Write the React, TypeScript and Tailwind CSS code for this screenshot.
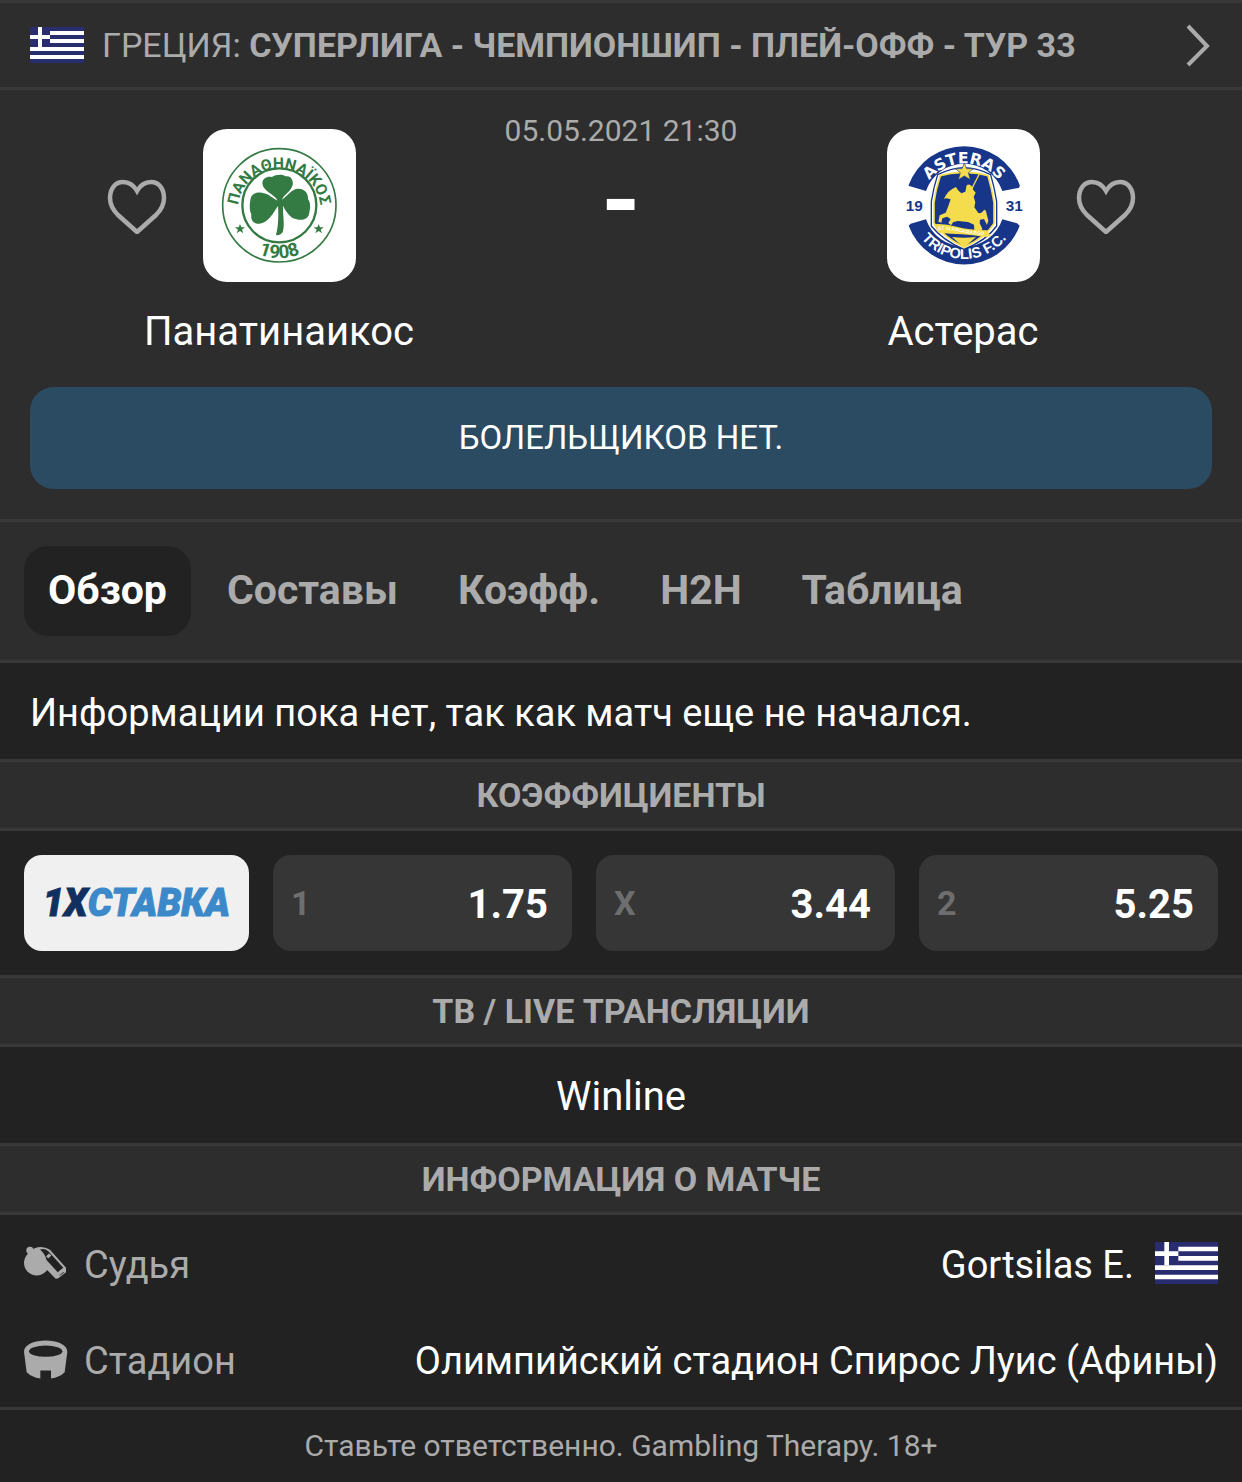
import React, { useState } from 'react';

interface Odd {
  label: string;
  value: string;
}

const tabs = ['Обзор', 'Составы', 'Коэфф.', 'H2H', 'Таблица'];

const odds: Odd[] = [
  { label: '1', value: '1.75' },
  { label: 'X', value: '3.44' },
  { label: '2', value: '5.25' },
];

function GreekFlag({ className }: { className: string }) {
  return (
    <svg viewBox="0 0 27 18" className={className} role="img" aria-label="Греция">
      <rect width="27" height="18" fill="#292c6f" />
      <path d="M10 2h17v2H10zM10 6h17v2H10zM0 10h27v2H0zM0 14h27v2H0z" fill="#fff" />
      <path d="M4 0h2v10H4zM0 4h10v2H0z" fill="#fff" />
    </svg>
  );
}

function PanathinaikosLogo() {
  return (
    <svg viewBox="39 27 459 459" className="h-full w-full" fill="#347a43" role="img" aria-label="Панатинаикос">
      <circle cx="268" cy="256" r="170" fill="none" stroke="#347a43" strokeWidth="5" />
      <circle cx="268" cy="256" r="111" fill="none" stroke="#347a43" strokeWidth="7" />
      <path id="pao-top" d="M144 270A124 124 0 1 1 392 270" fill="none" />
      <path id="pao-bottom" d="M109 256A159 159 0 0 0 427 256" fill="none" />
      <g className="font-bold" fontFamily="Roboto, 'Liberation Sans', sans-serif" textAnchor="middle">
        <text fontSize="47">
          <textPath href="#pao-top" startOffset="50%">ΠΑΝΑΘΗΝΑΪΚΟΣ</textPath>
        </text>
        <text fontSize="56">
          <textPath href="#pao-bottom" startOffset="50%">1908</textPath>
        </text>
      </g>
      <path d="M263 242C253 223 218 213 217 190C217 174 233 167 246 171C257 162 280 162 287 169C302 165 311 181 308 195C303 215 282 223 276 239C292 228 306 205 326 206C344 207 355 219 354 237C364 251 360 269 357 283C352 301 332 302 318 297C299 294 285 269 279 257C278 284 285 313 278 337C272 344 264 347 258 345C265 318 266 288 264 258C251 277 235 309 208 311C193 312 181 303 184 284C176 266 180 249 182 235C185 218 209 214 222 220C237 223 251 237 263 242Z" />
      <path d="M150 312l4 10h11l-9 7 4 11-10-7-10 7 4-11-9-7h11zM386 312l4 10h11l-9 7 4 11-10-7-10 7 4-11-9-7h11z" />
    </svg>
  );
}

function AsterasLogo() {
  return (
    <svg viewBox="51 27 459 459" className="h-full w-full" role="img" aria-label="Астерас">
      <g fill="#173689">
        <path d="M116 195A178 180 0 0 1 449 195Q450 202 446 204L397 213A121 121 0 0 0 168 213L120 199Q115 198 116 195Z" />
        <path d="M116 317A178 180 0 0 0 449 317L441 310L397 298A121 121 0 0 1 168 298L122 311Z" />
        <g className="font-bold" fontFamily="'Liberation Sans', sans-serif" fontSize="46">
          <text x="107" y="273">19</text>
          <text x="407" y="273">31</text>
        </g>
      </g>
      <path id="ast-top" d="M150 262A132 132 0 0 1 414 262" fill="none" />
      <path id="ast-bottom" d="M120 255A162 162 0 0 0 444 255" fill="none" />
      <text className="font-bold" fill="#fff" fontFamily="'DejaVu Sans', sans-serif" fontSize="47" textAnchor="middle">
        <textPath href="#ast-top" startOffset="50%">ASTERAS</textPath>
      </text>
      <text className="font-bold" fill="#fff" fontFamily="'Liberation Sans', sans-serif" fontSize="44" textAnchor="middle">
        <textPath href="#ast-bottom" startOffset="50%">TRIPOLIS F.C.</textPath>
      </text>
      <path d="M203 164Q247 143 282 143Q320 143 362 164Q374 205 380 245V318Q350 361 282 388Q218 361 184 318V245Q190 205 203 164Z" fill="#fff" stroke="#173689" strokeWidth="4" />
      <path d="M211 167Q248 156 282 158Q318 156 354 167Q366 208 372 248V310Q348 350 282 382Q220 350 192 310V248Q197 208 211 167Z" fill="#173689" stroke="#f5dc4d" strokeWidth="5" />
      <path d="M283 129l7 17h20l-15 12 6 21-18-11-18 11 6-21-15-12h20z" fill="#f5dc4d" stroke="#173689" strokeWidth="2" />
      <path d="M328 162l-17 33-7 17" fill="none" stroke="#f5dc4d" strokeWidth="4" />
      <path d="M222 236C229 220 239 210 248 206L258 201L264 211L274 220L286 215L290 196Q297 190 305 198L308 208L317 218L311 230L316 247L313 262L325 279Q335 281 339 274Q343 265 348 274L355 302L351 315L342 297L330 299L329 310L337 326L330 340L313 329L312 314L294 306L264 303L250 306L243 316L235 309L242 297L231 290L217 295L214 308L205 305L209 286L227 278L235 258L242 238L230 235Z" fill="#f5dc4d" />
      <path d="M190 313Q224 310 260 320T351 331L362 348L348 351Q307 345 275 343T206 338Z" fill="#f5dc4d" />
      <path d="M246 351Q282 356 318 351L282 383Z" fill="#f5dc4d" />
      <path id="ast-ribbon" d="M205 330Q238 328 271 336T360 345" fill="none" />
      <text className="font-bold" fill="#fff" fontFamily="'Liberation Sans', sans-serif" fontSize="14">
        <textPath href="#ast-ribbon">ET IN ARCADIA EGO</textPath>
      </text>
    </svg>
  );
}

function FavouriteButton({ team }: { team: string }) {
  return (
    <button type="button" aria-label={`В избранное: ${team}`}>
      <svg viewBox="0 0 60 56" className="h-14 w-15" fill="none" stroke="#ababab" strokeWidth="4.5">
        <path d="M30 13C26 6 21 4 16 4C8 4 3 11 3 20C3 27 6 32 11 37L30 54L49 37C54 32 57 27 57 20C57 11 52 4 44 4C39 4 34 6 30 13Z" />
      </svg>
    </button>
  );
}

function WhistleIcon() {
  return (
    <svg viewBox="4 0 132 104" className="h-[35px] w-11" fill="#ababab" aria-hidden="true">
      <circle cx="42" cy="50" r="38" />
      <circle cx="22" cy="13" r="11" />
      <path d="M16 20L36 6Q61-3 82 11L130 65V78L106 97L99 98L66 64Z" />
      <path d="M52 10Q65 5 77 15L122 65L105 78L72 42Q68 24 52 10Z" fill="#222" />
      <path d="M70 30l9-8 7 6-9 9zM106 84l18-13v3l-18 14z" />
      <path d="M110 87l13-10v3l-12 9z" fill="#222" />
    </svg>
  );
}

function StadiumIcon() {
  return (
    <svg viewBox="2 0 132 116" className="h-[39px] w-11" fill="#ababab" aria-hidden="true">
      <path d="M2 35C3-10 131-10 132 35L124 96Q109 111 83 115V91H51V115Q25 111 10 96Z" />
      <ellipse cx="67" cy="33" rx="50" ry="17" fill="#222" />
    </svg>
  );
}

function Team({ name, logo, side }: { name: string; logo: React.ReactNode; side: 'home' | 'away' }) {
  const heart = <FavouriteButton team={name} />;

  return (
    <div className="flex flex-col items-center">
      <div className="grid w-full grid-cols-[1fr_auto_1fr] items-center gap-9">
        <div className="flex justify-end">{side === 'home' && heart}</div>
        <div className="size-[153px] overflow-hidden rounded-3xl bg-white">{logo}</div>
        <div className="flex justify-start">{side === 'away' && heart}</div>
      </div>
      <h2 className="mt-6 text-[40px] leading-[52px] text-white">{name}</h2>
    </div>
  );
}

function SectionTitle({ children }: { children: React.ReactNode }) {
  return (
    <h3 className="border-y-3 border-[#383838] bg-[#2d2d2d] text-center text-[34px] leading-[66px] font-bold uppercase">
      {children}
    </h3>
  );
}

export default function App() {
  const [activeTab, setActiveTab] = useState('Обзор');

  return (
    <main className="bg-[#222222] font-['Roboto','Liberation_Sans',sans-serif] text-[#ababab]">
      <a href="#league" className="flex h-[90px] items-center border-y-3 border-[#383838] bg-[#2d2d2d] px-[30px] text-[34px]">
        <GreekFlag className="h-9 w-[54px]" />
        <span className="ml-[18px] whitespace-nowrap uppercase">
          Греция: <b className="font-bold">Суперлига - Чемпионшип - Плей-офф - Тур 33</b>
        </span>
        <svg viewBox="0 0 26 44" className="ml-auto h-11 w-[26px]" fill="none" stroke="#ababab" strokeWidth="4">
          <path d="M2 3L21 23L2 42" />
        </svg>
      </a>

      <section className="bg-[#2d2d2d] pb-[30px]">
        <div className="grid grid-cols-[1fr_228px_1fr] px-[51px] pt-[39px]">
          <Team name="Панатинаикос" logo={<PanathinaikosLogo />} side="home" />
          <div className="-mt-4 flex flex-col items-center">
            <time dateTime="2021-05-05T21:30" className="text-[30px] leading-9 whitespace-nowrap">05.05.2021 21:30</time>
            <span className="mt-2 text-[100px] leading-[88px] font-bold text-white">-</span>
          </div>
          <Team name="Астерас" logo={<AsterasLogo />} side="away" />
        </div>
        <div className="mx-[30px] mt-[29px] rounded-3xl bg-[#2b4b63] text-center text-[33px] leading-[102px] text-white uppercase">
          Болельщиков нет.
        </div>
      </section>

      <nav className="flex gap-3 border-y-3 border-[#383838] bg-[#2d2d2d] p-6">
        {tabs.map((tab) => (
          <button
            key={tab}
            type="button"
            onClick={() => setActiveTab(tab)}
            className={`h-[90px] rounded-3xl px-6 text-[41px] font-bold ${tab === activeTab ? 'bg-[#222222] text-white' : ''}`}
          >
            {tab}
          </button>
        ))}
      </nav>

      <p className="px-[30px] pt-1 text-[38px] leading-[92px] text-white">
        Информации пока нет, так как матч еще не начался.
      </p>

      <SectionTitle>Коэффициенты</SectionTitle>
      <div className="grid grid-cols-[225px_1fr_1fr_1fr] gap-6 p-6">
        <a href="#bookmaker" className="flex h-24 items-center justify-center rounded-[18px] bg-[#f0f0f0]">
          <span className="text-[38px] font-black text-[#3b89c9] italic [-webkit-text-stroke:1px]">
            <span className="text-[#12305f]">1X</span>СТАВКА
          </span>
        </a>
        {odds.map((odd) => (
          <button key={odd.label} type="button" className="flex h-24 items-center justify-between rounded-[18px] bg-[#363636] pr-6 pl-[18px] font-bold">
            <span className="text-[34px] text-[#6e6e6e]">{odd.label}</span>
            <span className="pt-1 text-[40px] text-white">{odd.value}</span>
          </button>
        ))}
      </div>

      <SectionTitle>ТВ / Live трансляции</SectionTitle>
      <p className="pt-1 text-center text-[40px] leading-[92px] text-white">Winline</p>

      <SectionTitle>Информация о матче</SectionTitle>
      <dl className="px-6 text-[38px] leading-[92px]">
        <div className="flex items-center justify-between">
          <dt className="flex items-center gap-4">
            <WhistleIcon />
            <span className="pt-1">Судья</span>
          </dt>
          <dd className="flex items-center gap-[21px] text-white">
            <span className="pt-1">Gortsilas E.</span>
            <GreekFlag className="h-[42px] w-[63px]" />
          </dd>
        </div>
        <div className="flex items-center justify-between">
          <dt className="flex items-center gap-4">
            <StadiumIcon />
            <span className="pt-1">Стадион</span>
          </dt>
          <dd className="pt-1 text-white">Олимпийский стадион Спирос Луис (Афины)</dd>
        </div>
      </dl>

      <footer className="border-t-3 border-[#383838] text-center text-[30px] leading-[72px]">
        Ставьте ответственно. Gambling Therapy. 18+
      </footer>
    </main>
  );
}
